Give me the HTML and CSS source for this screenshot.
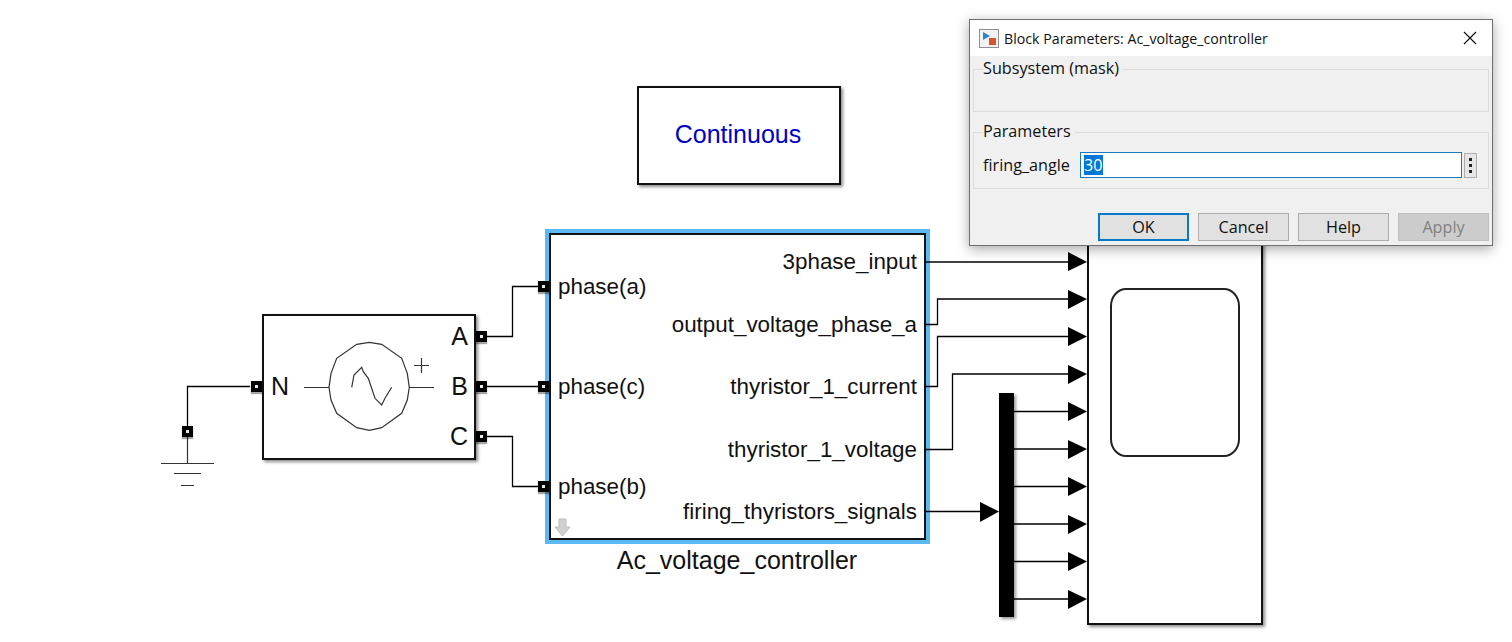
FILE: index.html
```html
<!DOCTYPE html>
<html lang="en">
<head>
    <meta charset="UTF-8">
    <title>Block Parameters: Ac_voltage_controller</title>
    <link rel="stylesheet" href="styles.css">
</head>
<body>
<div id="canvas">
    <!-- blocks -->
    <div class="block" id="solver">Continuous</div>

    <div class="block" id="source">
        <span class="big lbl-n">N</span>
        <span class="big lbl-a">A</span>
        <span class="big lbl-b">B</span>
        <span class="big lbl-c">C</span>
    </div>

    <div class="block" id="ctrl">
        <span class="txt in-a">phase(a)</span>
        <span class="txt in-c">phase(c)</span>
        <span class="txt in-b">phase(b)</span>
        <span class="txt out out-1">3phase_input</span>
        <span class="txt out out-2">output_voltage_phase_a</span>
        <span class="txt out out-3">thyristor_1_current</span>
        <span class="txt out out-4">thyristor_1_voltage</span>
        <span class="txt out out-5">firing_thyristors_signals</span>
    </div>
    <div id="caption">Ac_voltage_controller</div>

    <div class="block" id="scope"><div id="screen"></div></div>
    <div id="mux"></div>

    <!-- wires, arrows, symbols -->
    <svg id="wires" width="1512" height="642" viewBox="0 0 1512 642">
        <g class="wire">
            <path d="M926 262H1068"/>
            <path d="M926 324.500H937.500V299H1068"/>
            <path d="M926 386.500H937.500V336.500H1068"/>
            <path d="M926 449.500H952.500V374H1068"/>
            <path d="M926 511.500H981"/>
            <path d="M1013 411.500H1068M1013 449H1068M1013 486.500H1068M1013 524H1068M1013 561.500H1068M1013 599H1068"/>
            <path d="M487 336.500H512.500V286.500H538"/>
            <path d="M487 386.500H538"/>
            <path d="M487 436.500H512.500V486.500H538"/>
            <path d="M250 386.500H187.500V426"/>
        </g>
        <g class="arrow">
            <polygon points="1068,252 1087,262 1068,271"/>
            <polygon points="1068,290 1087,299 1068,309"/>
            <polygon points="1068,327 1087,336.500 1068,346"/>
            <polygon points="1068,365 1087,374 1068,384"/>
            <polygon points="1068,402 1087,411.500 1068,421"/>
            <polygon points="1068,440 1087,449 1068,459"/>
            <polygon points="1068,477 1087,486.500 1068,496"/>
            <polygon points="1068,515 1087,524 1068,534"/>
            <polygon points="1068,552 1087,561.500 1068,571"/>
            <polygon points="1068,590 1087,599 1068,609"/>
            <polygon points="980,502 999,511.500 980,522"/>
        </g>
        <g class="thin">
            <path d="M187.500 437V463M161 463.500H214M174 473.500H201M181 485.500H194"/>
            <path d="M304 387.500H329M409 387.500H434M414 365.500H429M421.500 358V373"/>
            <polygon points="369.300,342.300 381.700,344.300 401.700,358.300 407.300,373.300 409.300,387.300 407.300,400 401.700,413.300 381.700,427.700 369.300,430.300 356.700,427.700 336.700,413.300 331,400 329,387.300 331,373.300 336.700,358.300 356.700,344.300"/>
            <polyline points="351.700,387.300 354,375 361.700,367.300 363.300,371.700 368.300,378.300 375,398.300 381.700,405 385,398.300 391.700,387.300"/>
        </g>
        <polygon class="hint" points="559,519 566,519 566,527 570,527 562.500,536 555,527 559,527"/>
    </svg>

    <!-- ports -->
    <i class="port p-n"></i>
    <i class="port p-gnd"></i>
    <i class="port p-a"></i>
    <i class="port p-b"></i>
    <i class="port p-c"></i>
    <i class="port p-ia"></i>
    <i class="port p-ic"></i>
    <i class="port p-ib"></i>

    <!-- dialog -->
    <div id="dialog">
        <div class="titlebar">
            <svg class="appicon" width="20" height="19" viewBox="0 0 20 19">
                <rect x="0.500" y="0.500" width="19" height="18" fill="#f2f2f2" stroke="#8f8f8f"/>
                <polygon points="4,3 11,7 4,11" fill="#2a86c8"/>
                <rect x="10" y="9" width="7" height="7" fill="#d9542b"/>
            </svg>
            <span class="titletext">Block Parameters: Ac_voltage_controller</span>
            <svg class="close" width="14" height="14" viewBox="0 0 14 14">
                <path d="M1 1L13 13M13 1L1 13" stroke="#111" stroke-width="1.200" fill="none"/>
            </svg>
        </div>
        <div class="body">
            <fieldset class="group group-mask">
                <legend>Subsystem (mask)</legend>
            </fieldset>
            <fieldset class="group group-params">
                <legend>Parameters</legend>
                <div class="row">
                    <label>firing_angle</label>
                    <div class="input"><span class="sel">30</span></div>
                    <div class="dots"><b></b><b></b><b></b></div>
                </div>
            </fieldset>
            <div class="buttons">
                <div class="btn default">OK</div>
                <div class="btn">Cancel</div>
                <div class="btn">Help</div>
                <div class="btn disabled">Apply</div>
            </div>
        </div>
    </div>
</div>
</body>
</html>
```

FILE: styles.css
```css
* {
    margin: 0;
    padding: 0;
    box-sizing: border-box;
}
body {
    background: #fff;
    overflow: hidden;
}
#canvas {
    position: relative;
    width: 1512px;
    height: 642px;
    overflow: hidden;
    font-family: "Liberation Sans", Arial, sans-serif;
    color: #111;
}

/* diagram blocks */
.block {
    position: absolute;
    background: #fff;
    border: 2px solid #111;
    box-shadow: 2px 2px 3px rgba(0,0,0,.45);
}
#solver {
    left: 637px;
    top: 86px;
    width: 204px;
    height: 99px;
    display: flex;
    align-items: center;
    justify-content: center;
    padding: 0 2px 2px 0;
    font-size: 25px;
    color: #0000c4;
}
#source {
    left: 262px;
    top: 314px;
    width: 214px;
    height: 146px;
}
#ctrl {
    left: 549px;
    top: 233px;
    width: 377px;
    height: 307px;
    box-shadow: 0 0 0 4px #5cb8f2;
}
#scope {
    left: 1087px;
    top: 200px;
    width: 176px;
    height: 425px;
}
#screen {
    position: absolute;
    left: 21px;
    top: 86px;
    width: 130px;
    height: 169px;
    border: 2px solid #222;
    border-radius: 16px / 18px;
}
#mux {
    position: absolute;
    left: 999px;
    top: 393px;
    width: 15px;
    height: 224px;
    background: #000;
    box-shadow: 2px 2px 3px rgba(0,0,0,.4);
}
#caption {
    position: absolute;
    left: 545px;
    top: 546px;
    width: 384px;
    text-align: center;
    font-size: 25px;
    line-height: 29px;
}

/* port labels */
.big, .txt {
    position: absolute;
    white-space: nowrap;
}
.big {
    font-size: 25px;
    line-height: 28px;
}
.lbl-n { left: 7px; top: 56px; }
.lbl-a { right: 6px; top: 6px; }
.lbl-b { right: 6px; top: 56px; }
.lbl-c { right: 6px; top: 106px; }
.txt {
    font-size: 22.400px;
    line-height: 26px;
}
.in-a { left: 7px; top: 39px; }
.in-c { left: 7px; top: 139px; }
.in-b { left: 7px; top: 239px; }
.out { right: 7px; }
.out-1 { top: 14px; }
.out-2 { top: 77px; }
.out-3 { top: 139px; }
.out-4 { top: 202px; }
.out-5 { top: 264px; }

/* wires */
#wires {
    position: absolute;
    left: 0;
    top: 0;
    pointer-events: none;
}
.wire path {
    fill: none;
    stroke: #000;
    stroke-width: 1.300;
}
.arrow polygon {
    fill: #000;
}
.thin path, .thin polygon, .thin polyline {
    fill: none;
    stroke: #333;
    stroke-width: 1.200;
}
.hint {
    fill: #d0d0d0;
    stroke: #bdbdbd;
}

/* ports */
.port {
    position: absolute;
    width: 11px;
    height: 11px;
    background: #000;
    box-shadow: 0 2px 1px rgba(0,0,0,.35);
}
.port::after {
    content: "";
    position: absolute;
    left: 4px;
    top: 4px;
    width: 3px;
    height: 3px;
    background: #e8e8e8;
}
.p-n { left: 251px; top: 381px; }
.p-gnd { left: 182px; top: 426px; }
.p-a { left: 476px; top: 331px; }
.p-b { left: 476px; top: 381px; }
.p-c { left: 476px; top: 431px; }
.p-ia { left: 538px; top: 281px; }
.p-ic { left: 538px; top: 381px; }
.p-ib { left: 538px; top: 481px; }

/* dialog window */
#dialog {
    position: absolute;
    left: 969px;
    top: 19px;
    width: 524px;
    height: 227px;
    display: flex;
    flex-direction: column;
    background: #f0f0f0;
    border: 1px solid #6f6f6f;
    box-shadow: 0 3px 12px rgba(0,0,0,.35);
    font-family: "Open Sans", "Noto Sans", sans-serif;
    font-size: 16.200px;
    color: #111;
}
.titlebar {
    height: 36px;
    flex: none;
    background: #fff;
    display: flex;
    align-items: center;
    padding: 0 15px 0 9px;
}
.appicon {
    flex: none;
}
.titletext {
    flex: 1;
    margin-left: 5px;
    font-size: 14.200px;
}
.body {
    flex: 1;
    padding: 0 3px;
    display: flex;
    flex-direction: column;
}
.group {
    border: 1px solid #dcdcdc;
    padding: 0 10px;
}
.group legend {
    margin-left: -1px;
    padding: 0 4px 2px 0;
    line-height: 22px;
}
.group-mask {
    height: 55px;
    margin-top: 1px;
}
.group-params {
    height: 69px;
    margin-top: 8px;
}
.row {
    display: flex;
    align-items: center;
    height: 26px;
    margin-top: 8px;
}
.row label {
    width: 97px;
    margin-left: -1px;
}
.input {
    width: 382px;
    height: 26px;
    background: #fff;
    border: 1px solid #1d79bd;
    padding: 2px 3px;
    line-height: 20px;
}
.sel {
    display: inline-block;
    background: #0078d7;
    color: #fff;
    height: 20px;
}
.dots {
    width: 13px;
    height: 25px;
    margin-left: 2px;
    background: #e6e6e6;
    border: 1px solid #adadad;
    display: flex;
    flex-direction: column;
    align-items: center;
    justify-content: center;
    gap: 3px;
}
.dots b {
    width: 3px;
    height: 3px;
    background: #222;
}
.buttons {
    margin-top: 24px;
    display: flex;
    justify-content: flex-end;
    gap: 9px;
}
.btn {
    width: 91px;
    height: 28px;
    background: #e1e1e1;
    border: 1px solid #adadad;
    display: flex;
    align-items: center;
    justify-content: center;
}
.btn.default {
    border: 2px solid #0a78c8;
}
.btn.disabled {
    background: #ccc;
    border-color: #bfbfbf;
    color: #808080;
}
```
